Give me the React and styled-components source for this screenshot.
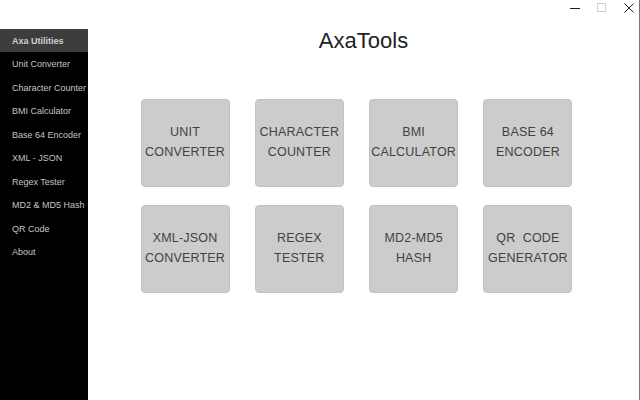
import React from "react";
import styled, { createGlobalStyle } from "styled-components";

const GlobalStyle = createGlobalStyle`
  html, body {
    margin: 0;
    padding: 0;
    background: #fff;
  }
  body {
    font-family: "Liberation Sans", Arial, sans-serif;
  }
`;

const Window = styled.div`
  width: 640px;
  height: 400px;
  display: flex;
  flex-direction: column;
  box-sizing: border-box;
  border-right: 1px solid #777;
  overflow: hidden;
`;

const TitleBar = styled.div`
  height: 29px;
  display: flex;
  justify-content: flex-end;
  align-items: flex-start;
  background: #fff;
  margin-right: -3px;
`;

const WinButton = styled.div`
  width: 27px;
  height: 15px;
  display: flex;
  align-items: center;
  justify-content: center;
  color: ${(p) => (p.disabled ? "#d0d0d0" : "#222")};
`;

const Body = styled.div`
  flex: 1;
  display: flex;
`;

const Sidebar = styled.div`
  width: 88px;
  background: #000;
  display: flex;
  flex-direction: column;
`;

const SideHeader = styled.div`
  height: 23px;
  background: #3d3d3d;
  color: #d0d0d0;
  font-size: 9px;
  font-weight: bold;
  display: flex;
  align-items: center;
  padding-left: 12px;
  margin-bottom: 0.5px;
`;

const SideItem = styled.div`
  height: 23.5px;
  color: #c4c4c4;
  font-size: 9px;
  display: flex;
  align-items: center;
  padding-left: 12px;
  white-space: nowrap;
`;

const Main = styled.div`
  flex: 1;
  display: flex;
  flex-direction: column;
  align-items: center;
`;

const Title = styled.h1`
  margin: 0;
  height: 70px;
  line-height: 24px;
  font-family: "Liberation Sans", Arial, sans-serif;
  font-weight: 400;
  font-size: 22px;
  color: #222;
`;

const Grid = styled.div`
  display: grid;
  grid-template-columns: repeat(4, 89px);
  grid-auto-rows: 88px;
  column-gap: 25.3px;
  row-gap: 18px;
  margin-left: -14px;
`;

const Tile = styled.div`
  background: #cccccc;
  border: 1px solid #c2c2c2;
  border-radius: 4px;
  box-sizing: border-box;
  display: flex;
  flex-direction: column;
  align-items: center;
  justify-content: center;
  text-align: center;
  font-family: "Liberation Sans", Arial, sans-serif;
  font-size: 12.5px;
  line-height: 19.5px;
  color: #424242;
  letter-spacing: 0.2px;
  padding-bottom: 1px;
`;

const Line = styled.span`
  white-space: pre;
`;

const menu = [
  "Unit Converter",
  "Character Counter",
  "BMI Calculator",
  "Base 64 Encoder",
  "XML - JSON",
  "Regex Tester",
  "MD2 & MD5 Hash",
  "QR Code",
  "About",
];

const tools = [
  ["UNIT", "CONVERTER"],
  ["CHARACTER", "COUNTER"],
  ["BMI", "CALCULATOR"],
  ["BASE 64", "ENCODER"],
  ["XML-JSON", "CONVERTER"],
  ["REGEX", "TESTER"],
  ["MD2-MD5", "HASH"],
  ["QR  CODE", "GENERATOR"],
];

const App = () => {
  return (
    <>
      <GlobalStyle />
      <Window>
        <TitleBar>
          <WinButton>
            <svg width="10" height="10" viewBox="0 0 10 10">
              <path d="M0 5.5H10" stroke="currentColor" strokeWidth="1" />
            </svg>
          </WinButton>
          <WinButton disabled>
            <svg width="10" height="10" viewBox="0 0 10 10">
              <rect x="0.5" y="0.5" width="8" height="8" fill="none" stroke="currentColor" />
            </svg>
          </WinButton>
          <WinButton>
            <svg width="10" height="10" viewBox="0 0 10 10">
              <path d="M0.5 0.5L9.5 9.5M9.5 0.5L0.5 9.5" stroke="currentColor" strokeWidth="1" />
            </svg>
          </WinButton>
        </TitleBar>
        <Body>
          <Sidebar>
            <SideHeader>Axa Utilities</SideHeader>
            {menu.map((m) => (
              <SideItem key={m}>{m}</SideItem>
            ))}
          </Sidebar>
          <Main>
            <Title>AxaTools</Title>
            <Grid>
              {tools.map((t, i) => (
                <Tile key={i}>
                  <Line>{t[0]}</Line>
                  <Line>{t[1]}</Line>
                </Tile>
              ))}
            </Grid>
          </Main>
        </Body>
      </Window>
    </>
  );
};

export default App;
